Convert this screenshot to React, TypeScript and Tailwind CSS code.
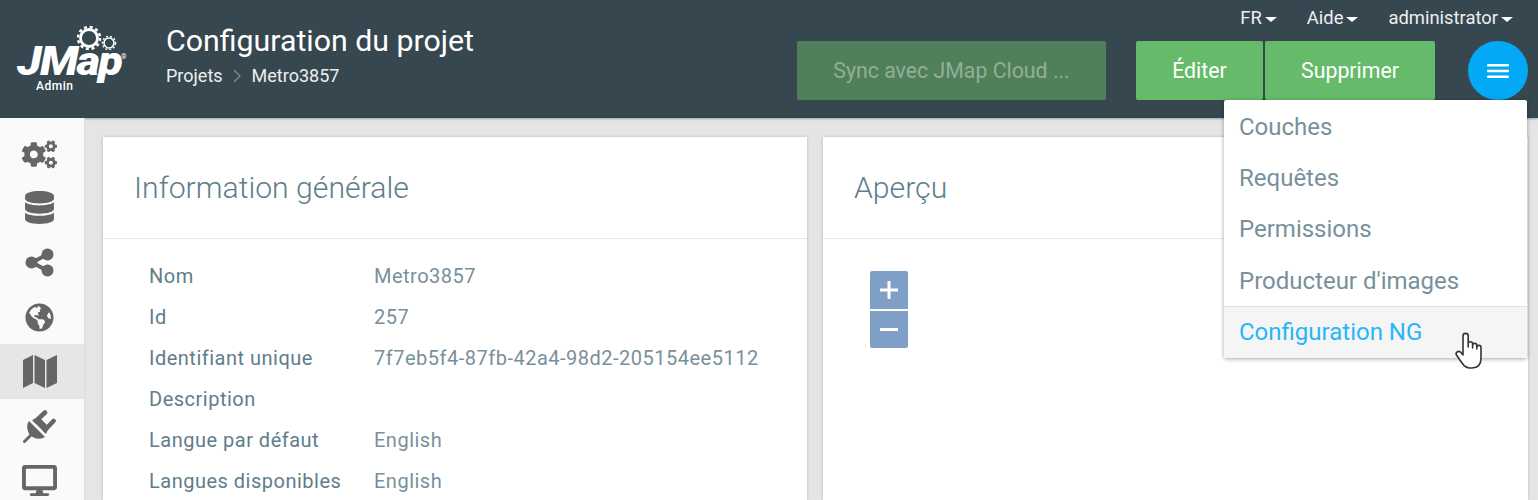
import { FaCogs, FaDatabase, FaGlobeAmericas, FaDesktop } from 'react-icons/fa';

const fields = [
  ['Nom', 'Metro3857'],
  ['Id', '257'],
  ['Identifiant unique', '7f7eb5f4-87fb-42a4-98d2-205154ee5112'],
  ['Description', ''],
  ['Langue par défaut', 'English'],
  ['Langues disponibles', 'English'],
];

function Caret() {
  return <span className="ml-[3px] inline-block h-0 w-0 border-x-[6px] border-t-[5px] border-x-transparent border-t-white align-middle" />;
}

function Logo() {
  return (
    <div className="relative h-[90px] w-[118px] shrink-0 text-white">
      <svg className="absolute left-[76px] top-[25px]" width="44" height="30" viewBox="0 0 44 30" fill="none" stroke="white">
        <circle cx="13" cy="13" r="8.5" strokeWidth="2.8" />
        <circle cx="13" cy="13" r="11" strokeWidth="2.5" strokeDasharray="3 2.8" />
        <circle cx="33" cy="18" r="5" strokeWidth="1.6" />
        <circle cx="33" cy="18" r="6.6" strokeWidth="1.4" strokeDasharray="2 2" />
      </svg>
      <span className="absolute left-[17px] top-[46px] origin-left scale-x-[1.13] text-[40px] font-black italic leading-[32px] tracking-[-1.5px]">JMap</span>
      <span className="absolute left-[121px] top-[54px] text-[7px] leading-none">®</span>
      <span className="absolute left-[36px] top-[80px] text-[12px] font-medium leading-none tracking-[0.5px]">Admin</span>
    </div>
  );
}

function Card({ title, className, children }: { title: string; className: string; children: React.ReactNode }) {
  return (
    <section className={`bg-white shadow-[0_0_3px_rgba(0,0,0,0.2)] ${className}`}>
      <h2 className="flex h-[102px] items-center border-b border-[#e4e7ea] px-[31px] text-[30.2px] font-light text-[#607d8b]">{title}</h2>
      {children}
    </section>
  );
}

export default function App() {
  return (
    <div className="relative flex h-[500px] w-[1538px] flex-col overflow-hidden bg-[#e5e5e5] font-['Roboto',sans-serif]">
      <header className="flex h-[118px] shrink-0 items-start bg-[#37474f] shadow-[0_1px_2px_rgba(0,0,0,0.3)]">
        <Logo />
        <div className="ml-[48px] pt-[24px] text-white">
          <h1 className="text-[30.3px] leading-[34px]">Configuration du projet</h1>
          <div className="mt-[6px] flex items-center text-[18px] leading-[24px] text-[#eceff1]">
            Projets
            <svg className="mx-[10px]" width="9" height="14" viewBox="0 0 9 14" fill="none" stroke="#78909c" strokeWidth="1.2"><path d="M1 1l6 6-6 6" /></svg>
            Metro3857
          </div>
        </div>
        <div className="ml-auto flex h-full flex-col items-end pr-[10px]">
          <nav className="flex h-[41px] items-center gap-[30px] pr-[15px] pb-[5px] text-[18.4px] text-[#eceff1]">
            <span>FR<Caret /></span>
            <span>Aide<Caret /></span>
            <span>administrator<Caret /></span>
          </nav>
          <div className="flex items-start">
            <button className="mr-[30px] h-[59px] w-[309px] rounded-[2px] bg-[#508059] pt-[1px] text-[21.3px] text-[#94ae98]">Sync avec JMap Cloud ...</button>
            <button className="h-[59px] w-[127px] rounded-[2px] bg-[#66bb6a] pt-[1px] text-[21.3px] text-white">Éditer</button>
            <button className="ml-[2px] h-[59px] w-[170px] rounded-[2px] bg-[#66bb6a] pt-[1px] text-[21.3px] text-white">Supprimer</button>
            <button className="ml-[33px] flex h-[59px] w-[60px] items-center justify-center rounded-full bg-[#03a9f4]">
              <svg width="22" height="14" viewBox="0 0 22 14" fill="white"><rect width="22" height="2.6" rx="1" /><rect y="5.7" width="22" height="2.6" rx="1" /><rect y="11.4" width="22" height="2.6" rx="1" /></svg>
            </button>
          </div>
        </div>
      </header>

      <div className="flex min-h-0 flex-1">
        <aside className="flex w-[85px] shrink-0 flex-col items-stretch border-r border-[#dcdcdc] bg-[#fafafa] pt-[8px] text-[#666666]">
          <div className="flex h-[54px] shrink-0 items-center justify-center pt-[3px] pr-[5px]"><FaCogs size={35} /></div>
          <div className="flex h-[55px] shrink-0 items-center justify-center pr-[5px]"><FaDatabase size={33} /></div>
          <div className="flex h-[55px] shrink-0 items-center justify-center pr-[5px]">
            <svg width="29" height="29" viewBox="0 0 29 29" fill="currentColor" stroke="currentColor">
              <path d="M7 14.5L22 6.5M7 14.5L22 22.5" strokeWidth="4" fill="none" />
              <circle cx="6.5" cy="14.5" r="6" stroke="none" />
              <circle cx="22.5" cy="6.5" r="6" stroke="none" />
              <circle cx="22.5" cy="22.5" r="6" stroke="none" />
            </svg>
          </div>
          <div className="flex h-[54px] shrink-0 items-center justify-center pr-[5px]"><FaGlobeAmericas size={29} /></div>
          <div className="flex h-[55px] shrink-0 items-center justify-center bg-[#e6e6e6] pr-[5px]">
            <svg width="34" height="33" viewBox="0 0 34 33" fill="currentColor">
              <path d="M0 5L10 0V28L0 33Z" />
              <path d="M11.5 0L22 5V33L11.5 28Z" />
              <path d="M23.5 5L34 0V28L23.5 33Z" />
            </svg>
          </div>
          <div className="flex h-[55px] shrink-0 items-center justify-center pr-[5px]">
            <svg width="33" height="33" viewBox="0 0 33 33" fill="currentColor" stroke="currentColor">
              <path d="M1.5 31.5L9 24" strokeWidth="3" strokeLinecap="round" fill="none" />
              <path d="M6 11L22 27C17 30 11 29 7 25C4 21 3 15 6 11Z" stroke="none" />
              <path d="M13 11L22 2.5M22 20L30.5 11" strokeWidth="4.6" strokeLinecap="round" fill="none" />
              <path d="M9 10L16 7L26 17L23 24Z" stroke="none" />
            </svg>
          </div>
          <div className="flex h-[55px] shrink-0 items-center justify-center pb-[3px] pr-[5px]"><FaDesktop size={35} /></div>
        </aside>

        <main className="flex flex-1 gap-[16px] pt-[19px] pl-[18px] pr-[10px]">
          <Card title="Information générale" className="w-[704px]">
            <dl className="px-[46px] pt-[16px] text-[20px] tracking-[0.5px]">
              {fields.map(([label, value]) => (
                <div key={label} className="flex h-[41px] items-center">
                  <dt className="w-[225px] text-[#607d8b]">{label}</dt>
                  <dd className="text-[#78909c]">{value}</dd>
                </div>
              ))}
            </dl>
          </Card>
          <Card title="Aperçu" className="flex-1">
            <div className="ml-[47px] mt-[32px] flex w-[38px] flex-col gap-[2px]">
              <button aria-label="Zoom avant" className="flex h-[38px] items-center justify-center rounded-t-[2px] bg-[#7f9fc6]">
                <svg width="18" height="18" viewBox="0 0 18 18" fill="white"><rect y="7.5" width="18" height="3" /><rect x="7.5" width="3" height="18" /></svg>
              </button>
              <button aria-label="Zoom arrière" className="flex h-[37px] items-center justify-center rounded-b-[2px] bg-[#7f9fc6]">
                <svg width="18" height="3" viewBox="0 0 18 3" fill="white"><rect width="18" height="3" /></svg>
              </button>
            </div>
          </Card>
        </main>
      </div>

      <div className="absolute left-[1224px] top-[100px] w-[303px] rounded-[2px] bg-white text-[24px] text-[#78909c] shadow-[0_1px_4px_rgba(0,0,0,0.35)]">
        <div className="flex h-[53px] items-center px-[15px]">Couches</div>
        <div className="flex h-[50px] items-center px-[15px]">Requêtes</div>
        <div className="flex h-[52px] items-center px-[15px]">Permissions</div>
        <div className="flex h-[51px] items-center px-[15px]">Producteur d'images</div>
        <div className="flex h-[52px] items-center border-t border-[#e0e0e0] bg-[#f5f5f5] px-[15px] pb-[2px] text-[#29b6f6]">Configuration NG</div>
      </div>
      <svg className="absolute left-[1455px] top-[332px]" width="28" height="37" viewBox="0 0 28 37" fill="white" stroke="#333333" strokeWidth="1.6" strokeLinejoin="round">
        <path d="M8 23V4a2.6 2.6 0 0 1 5.2 0V15V12a2.2 2.2 0 0 1 4.4 0V16V13.5a2.1 2.1 0 0 1 4.2 0V17V15.5a2.1 2.1 0 0 1 4.2 0V26c0 6-3 10-9 10h-2c-4 0-6-2-8-5l-5.5-8c-1.5-2.2 1.8-4.8 4-3z" />
      </svg>
    </div>
  );
}
